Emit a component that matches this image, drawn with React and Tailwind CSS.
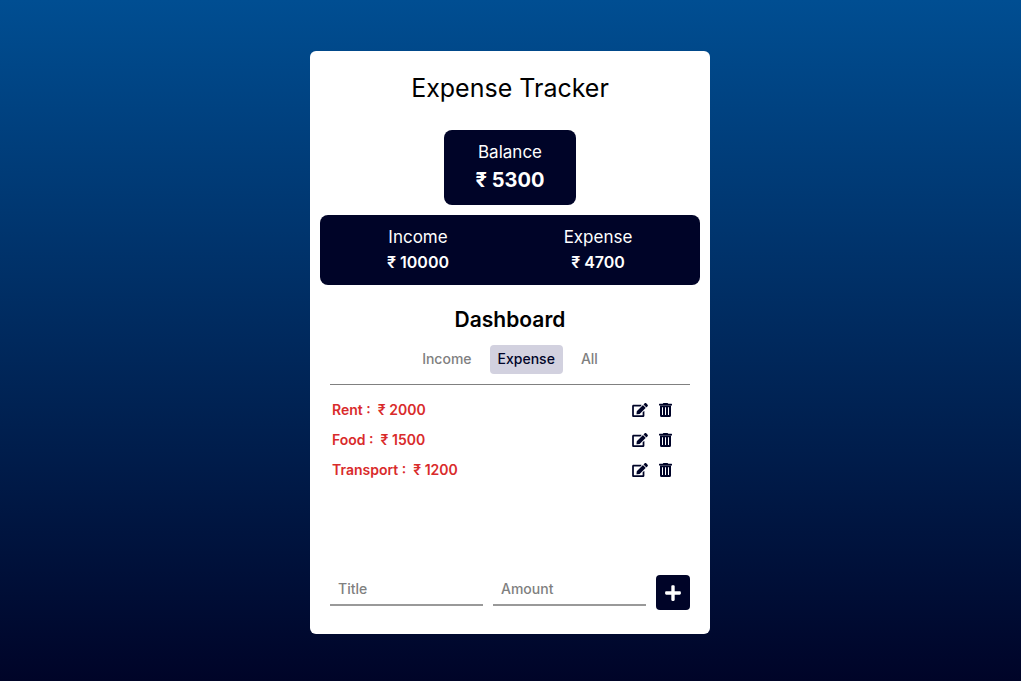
import { useState } from "react";
import { FaEdit, FaPlus } from "react-icons/fa";

const initialEntries = [
  { id: 1, type: "Income", title: "Salary", amount: 10000 },
  { id: 2, type: "Expense", title: "Rent", amount: 2000 },
  { id: 3, type: "Expense", title: "Food", amount: 1500 },
  { id: 4, type: "Expense", title: "Transport", amount: 1200 },
];

const tabs = ["Income", "Expense", "All"];

function total(entries, type) {
  return entries
    .filter((entry) => entry.type === type)
    .reduce((sum, entry) => sum + entry.amount, 0);
}

function TrashIcon() {
  return (
    <svg className="h-[14px] w-[13px]" viewBox="0 0 13 14" fill="currentColor" aria-hidden="true">
      <path d="M4.4 0h4.2l.7.8h3.2q.5 0 .5.5v1.2H0V1.3q0-.5.5-.5h3.2z" />
      <path
        fillRule="evenodd"
        d="M1 2.4h11v10.1q0 1.500-1.500 1.500h-8Q1 14 1 12.500zM3 4.200v7.800h1V4.200zM6 4.200v7.800h1V4.200zM9 4.200v7.800h1V4.200z"
      />
    </svg>
  );
}

function Entry({ entry, onEdit, onDelete }) {
  const color = entry.type === "Expense" ? "text-[#d92b2b]" : "text-[#1b8a3a]";
  return (
    <li className="flex h-[30px] items-center justify-between pr-[18px] pl-0.5">
      <span className={`pb-0.5 text-[14px] font-semibold ${color}`}>
        {entry.title} : &nbsp;₹ {entry.amount}
      </span>
      <span className="flex items-center gap-[11px] text-[#000428]">
        <button type="button" aria-label={`Edit ${entry.title}`} onClick={() => onEdit(entry)}>
          <FaEdit className="h-[14px] w-4" />
        </button>
        <button type="button" aria-label={`Delete ${entry.title}`} onClick={() => onDelete(entry)}>
          <TrashIcon />
        </button>
      </span>
    </li>
  );
}

export default function App() {
  const [entries, setEntries] = useState(initialEntries);
  const [tab, setTab] = useState("Expense");
  const [title, setTitle] = useState("");
  const [amount, setAmount] = useState("");

  const income = total(entries, "Income");
  const expense = total(entries, "Expense");
  const visible = entries.filter((entry) => tab === "All" || entry.type === tab);

  const remove = (entry) => setEntries(entries.filter((item) => item.id !== entry.id));
  const edit = (entry) => {
    setTitle(entry.title);
    setAmount(String(entry.amount));
    remove(entry);
  };
  const add = (event) => {
    event.preventDefault();
    if (!title || !Number(amount)) return;
    const type = tab === "Income" ? "Income" : "Expense";
    setEntries([...entries, { id: Date.now(), type, title, amount: Number(amount) }]);
    setTitle("");
    setAmount("");
  };

  const field =
    "h-[31px] w-full min-w-0 flex-1 border-b-2 border-[#999999] px-2 pb-0.5 text-[14px] font-medium outline-none placeholder:text-[#808080]";

  return (
    <div className="flex min-h-screen items-center justify-center bg-linear-to-b/srgb from-[#004e92] to-[#000428] pt-1 pr-px font-[Inter,sans-serif]">
      <main className="w-full max-w-[400px] rounded-md bg-white px-2.5 pt-5 pb-6 text-black">
        <h1 className="mb-6 text-center text-[25px] leading-[35px]">Expense Tracker</h1>

        <section className="mx-auto w-fit rounded-lg bg-[#000428] px-8 py-2.5 text-center text-white">
          <h2 className="text-[17px] leading-[25px]">Balance</h2>
          <p className="text-[20px] leading-[30px] font-bold">₹ {income - expense}</p>
        </section>

        <section className="mt-2.5 grid grid-cols-2 rounded-lg bg-[#000428] py-2.5 pr-3 pl-2 text-center text-white">
          <div>
            <h2 className="text-[17px] leading-[25px]">Income</h2>
            <p className="text-[16px] leading-[25px] font-semibold">₹ {income}</p>
          </div>
          <div>
            <h2 className="text-[17px] leading-[25px]">Expense</h2>
            <p className="text-[16px] leading-[25px] font-semibold">₹ {expense}</p>
          </div>
        </section>

        <section className="mt-5 px-2.5">
          <h2 className="text-center text-[21px] leading-[30px] font-semibold">Dashboard</h2>
          <div className="mt-2.5 flex justify-center gap-2.5 border-b border-[#808080] pb-2.5">
            {tabs.map((name) => (
              <button
                key={name}
                type="button"
                aria-pressed={tab === name}
                onClick={() => setTab(name)}
                className={`h-[29px] rounded px-2 pb-0.5 text-[14px] font-medium ${
                  tab === name ? "bg-[#d2d1df] text-[#000428]" : "text-[#808080]"
                }`}
              >
                {name}
              </button>
            ))}
          </div>

          <ul className="h-[190px] overflow-y-auto pt-2.5">
            {visible.map((entry) => (
              <Entry key={entry.id} entry={entry} onEdit={edit} onDelete={remove} />
            ))}
          </ul>

          <form className="flex gap-2.5" onSubmit={add}>
            <input
              className={field}
              type="text"
              aria-label="Title"
              placeholder="Title"
              value={title}
              onChange={(event) => setTitle(event.target.value)}
            />
            <input
              className={field}
              type="text"
              inputMode="numeric"
              aria-label="Amount"
              placeholder="Amount"
              value={amount}
              onChange={(event) => setAmount(event.target.value)}
            />
            <button
              type="submit"
              aria-label="Add entry"
              className="flex h-[35px] w-[34px] items-center justify-center rounded bg-[#000428] text-white"
            >
              <FaPlus className="h-[18px] w-[18px]" />
            </button>
          </form>
        </section>
      </main>
    </div>
  );
}
